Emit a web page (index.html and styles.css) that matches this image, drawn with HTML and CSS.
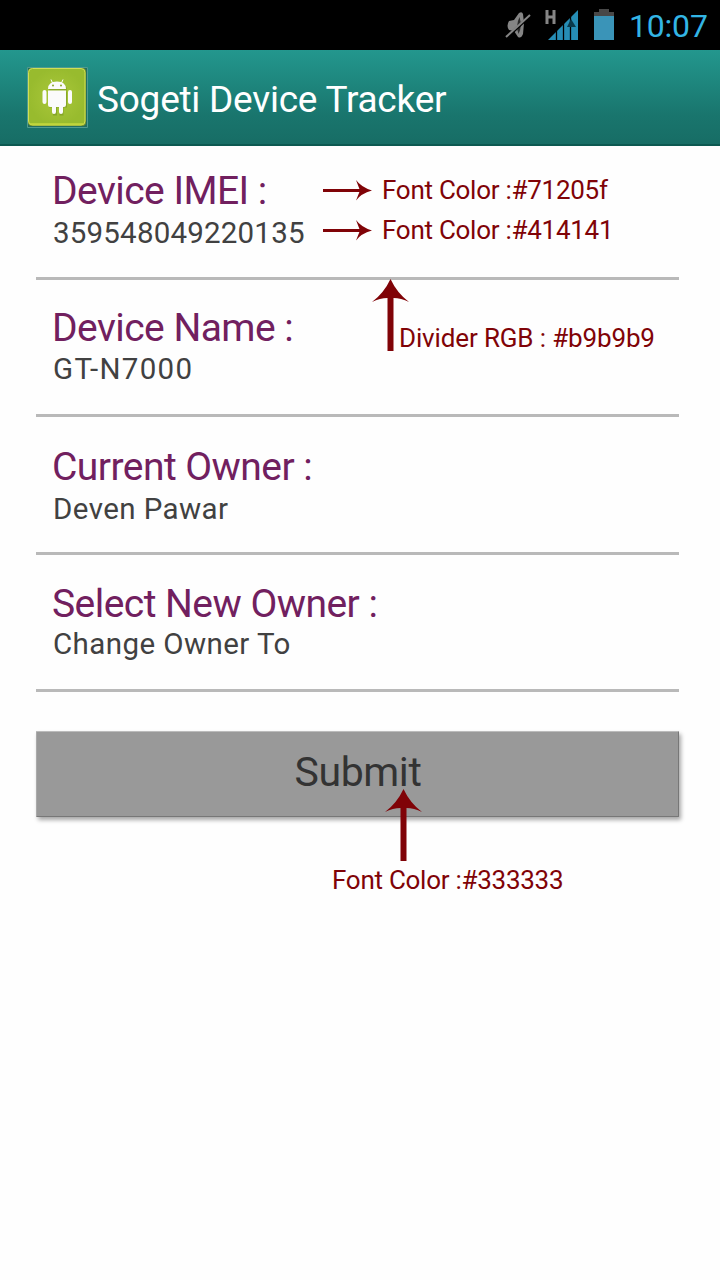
FILE: index.html
```
<!DOCTYPE html>
<html lang="en">
<head>
<meta charset="utf-8">
<title>Sogeti Device Tracker</title>
<link rel="stylesheet" href="styles.css">
</head>
<body>
<div class="status-bar">
  <svg class="mute" width="26" height="29" viewBox="0 0 26 29"><path d="M4 10l5-1 5-7q3-2 4 1l1 9-1 11q-2 5-5 3l-4-6-5-1q-3-4 0-9z" fill="#858585"/><path d="M14.500 6q-4 8-1 17 4-7 1-17z" fill="#2b2b2b"/><path d="M1 27L25 5" stroke="#000" stroke-width="3"/><path d="M1 26L25 4" stroke="#858585" stroke-width="2"/></svg>
  <svg class="signal" width="34" height="32" viewBox="0 0 34 32"><path d="M2 1v14M9 1v14M2 8h7" stroke="#858585" stroke-width="3" fill="none"/><path d="M3 31L33 1v30z" fill="#268db5"/><path d="M11.500 20v11M18.500 13v18M25.500 6v25" stroke="#000" stroke-width="1.300"/><path d="M22 18l4-8 5 8z" fill="#09394b"/></svg>
  <svg class="battery" width="20" height="32" viewBox="0 0 20 32"><path d="M0 3h5V0h10v3h5v5H0z" fill="#484848"/><path d="M0 7h20v24H0z" fill="#3a94b8"/></svg>
  <span class="clock">10:07</span>
</div>
<header class="action-bar">
  <svg class="app-icon" width="62" height="62" viewBox="0 0 62 62"><defs><radialGradient id="g"><stop stop-color="#aac83a"/><stop offset="1" stop-color="#98bb2e"/></radialGradient></defs><path d="M.5.500h60v60H.5z" fill="#236e60" stroke="#4f9b90"/><rect x="1" y="1" width="58" height="58" rx="4" fill="#7e982b"/><rect x="1.500" y="1.500" width="56.500" height="56.500" rx="4" fill="url(#g)" stroke="#d0df55"/><path d="M3 57h53" stroke="#c5d83d" stroke-width="1.500"/><g fill="#567315" opacity=".35" transform="translate(1 1.500)"><path d="M21 22q0-8 9-8t9 8zM21 23h18v16H21zM25 39h4v8h-4zM31.500 39h4v8h-4z"/></g><g fill="#fbfbfb"><path d="M21 22q0-7.500 9-7.500t9 7.500zM21 23.500h18V38q0 2-2 2h-1v5q0 2-2 2t-2-2v-5h-3v5q0 2-2 2t-2-2v-5h-2q-2 0-2-2z"/><rect x="15.500" y="23" width="4" height="14" rx="2"/><rect x="41" y="23" width="4" height="14" rx="2"/><path d="M25.500 16L24 12.500M34.500 16l1.500-3.500" stroke="#fff"/></g><circle cx="26" cy="18.500" r="1" fill="#87a72d"/><circle cx="34" cy="18.500" r="1" fill="#87a72d"/></svg>
  <h1 class="title">Sogeti Device Tracker</h1>
</header>
<main class="form">
  <section class="field imei">
    <h2 class="label">Device IMEI :</h2>
    <p class="value">359548049220135</p>
    <div class="note note-label"><svg width="50" height="22" viewBox="0 0 50 22"><path d="M0 11.500h37" stroke="#800307" stroke-width="3"/><path d="M33 1q5 7 16 10.500-11 3-16 10l4-10z" fill="#800307"/></svg><span>Font Color :#71205f</span></div>
    <div class="note note-value"><svg width="50" height="22" viewBox="0 0 50 22"><path d="M0 11.500h37" stroke="#800307" stroke-width="3"/><path d="M33 1q5 7 16 10.500-11 3-16 10l4-10z" fill="#800307"/></svg><span>Font Color :#414141</span></div>
  </section>
  <section class="field name">
    <h2 class="label">Device Name :</h2>
    <p class="value">GT-N7000</p>
    <div class="note note-divider"><svg width="38" height="72" viewBox="0 0 38 72"><path d="M18.500 0Q25 14 37 23q-8-4-15.500-4v53h-6V19Q8 19 0 23 12 14 18.500 0z" fill="#800307"/></svg><span>Divider RGB : #b9b9b9</span></div>
  </section>
  <section class="field owner">
    <h2 class="label">Current Owner :</h2>
    <p class="value">Deven Pawar</p>
  </section>
  <section class="field new-owner">
    <h2 class="label">Select New Owner :</h2>
    <p class="value">Change Owner To</p>
  </section>
  <div class="action">
    <button class="submit">Submit</button>
    <div class="note note-submit"><svg width="38" height="72" viewBox="0 0 38 72"><path d="M18.500 0Q25 14 37 23q-8-4-15.500-4v53h-6V19Q8 19 0 23 12 14 18.500 0z" fill="#800307"/></svg><span>Font Color :#333333</span></div>
  </div>
</main>
</body>
</html>
```
FILE: styles.css
```
* { box-sizing: border-box; }
body { margin: 0; min-height: 1280px; background: #fefefe; font-family: Roboto, "Liberation Sans", sans-serif; }
h1, h2, p { margin: 0; font-weight: 400; white-space: nowrap; }
svg { display: block; flex: none; }
.status-bar { height: 50px; background: #000; display: flex; align-items: flex-start; padding: 9px 0 0 505px; }
.mute { margin-top: 2px; }
.signal { margin-left: 14px; }
.battery { margin-left: 15px; }
.clock { margin-left: 15px; font-size: 32px; line-height: 34px; letter-spacing: -.2px; color: #33b5e5; white-space: nowrap; }
.action-bar { height: 96px; display: flex; padding: 17px 0 0 27px; background: linear-gradient(#23978e, #19756d 70%, #176d65); border-bottom: 2px solid #0c5951; }
.title { margin-left: 8px; color: #fff; font-size: 37px; line-height: 66px; letter-spacing: -.24px; }
.form { padding: 0 41px 0 36px; }
.field { position: relative; height: 137px; padding: 24px 0 0 16px; border-bottom: 3px solid #b9b9b9; }
.imei { height: 134px; padding-top: 21px; }
.owner { height: 138px; padding-top: 26px; }
.new-owner { padding-top: 25px; }
.label { font-size: 39px; line-height: 48px; height: 47px; letter-spacing: -.54px; color: #71205f; }
.value { font-size: 29.500px; line-height: 36px; padding-left: 1px; letter-spacing: .42px; color: #414141; }
.imei .label, .owner .label { height: 48px; }
.new-owner .label { height: 46px; }
.imei .value { letter-spacing: .2px; }
.name .value { letter-spacing: 1.300px; }
.note { position: absolute; color: #800307; font-size: 26px; line-height: 30px; letter-spacing: -.27px; white-space: nowrap; display: flex; }
.note-label { left: 287px; top: 29px; gap: 9px; }
.note-value { left: 287px; top: 69px; gap: 9px; }
.note svg { align-self: center; }
.note-divider { left: 336px; top: -1px; letter-spacing: -.14px; }
.note-divider svg { align-self: flex-start; }
.note-divider span { margin: 44px 0 0 -11px; }
.action { position: relative; padding-top: 39px; }
.submit { display: block; width: 643px; height: 86px; border: 1px solid #777; border-top-color: #bbb; border-left-color: #aaa; border-radius: 1px; background: #999; color: #333; font: 41px Roboto, "Liberation Sans", sans-serif; letter-spacing: -.4px; padding: 0 0 5px 1px; box-shadow: 2px 3px 4px rgba(0,0,0,.35); }
.note-submit { left: 296px; top: 97px; flex-direction: column; gap: 4px; }
.note-submit .arrow, .note-submit svg { align-self: flex-start; margin-left: 53px; }
```
